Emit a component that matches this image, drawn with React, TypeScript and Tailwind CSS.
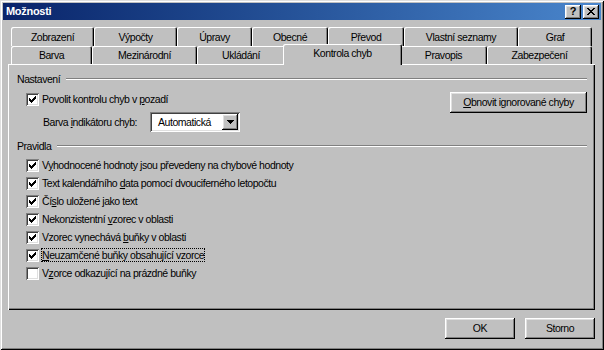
import React from "react";

const raised =
  "bg-[#c0c0c0] shadow-[inset_-1px_-1px_#000,inset_1px_1px_#fff,inset_-2px_-2px_#808080,inset_2px_2px_#dfdfdf]";
const sunken =
  "bg-white shadow-[inset_1px_1px_#808080,inset_-1px_-1px_#fff,inset_2px_2px_#404040,inset_-2px_-2px_#dfdfdf]";

const row1 = [
  { label: "Zobrazení", w: "w-[83px]" },
  { label: "Výpočty", w: "w-[83px]" },
  { label: "Úpravy", w: "w-[75px]" },
  { label: "Obecné", w: "w-[76px]" },
  { label: "Převod", w: "w-[76px]" },
  { label: "Vlastní seznamy", w: "w-[114px]" },
  { label: "Graf", w: "w-[74px]" },
];

const row2 = [
  { label: "Barva", w: "w-[81px]" },
  { label: "Mezinárodní", w: "w-[105px]" },
  { label: "Ukládání", w: "w-[88px]" },
  { label: "Kontrola chyb", w: "w-[119px]", active: true },
  { label: "Pravopis", w: "w-[87px]" },
  { label: "Zabezpečení", w: "w-[105px]" },
];

function Check({ checked }: { checked: boolean }) {
  return (
    <span className={`w-[13px] h-[13px] shrink-0 ${sunken}`}>
      {checked && (
        <svg width="13" height="13" viewBox="0 0 13 13" shapeRendering="crispEdges">
          <path
            d="M3 5h1v3h-1zM4 6h1v3h-1zM5 7h1v3h-1zM6 6h1v3h-1zM7 5h1v3h-1zM8 4h1v3h-1zM9 3h1v3h-1z"
            fill="#000"
          />
        </svg>
      )}
    </span>
  );
}

function GroupHeader({ title }: { title: string }) {
  return (
    <div className="flex items-center h-[14px] pr-[8px]">
      <span className="pr-[6px]">{title}</span>
      <div className="flex-1 h-[2px] border-t border-[#808080] border-b border-b-white" />
    </div>
  );
}

function Tab({ label, w, active }: { label: string; w: string; active?: boolean }) {
  if (active) {
    return (
      <div
        className={`relative z-10 -mx-[2px] -mb-[1px] h-[21px] ${w} flex items-center justify-center pb-[2px] bg-[#c0c0c0] rounded-t-[2px] shadow-[inset_1px_1px_#fff,inset_-1px_0_#000,inset_-2px_0_#808080]`}
      >
        {label}
      </div>
    );
  }
  return (
    <div
      className={`h-full ${w} flex items-center justify-center pt-[1px] bg-[#c0c0c0] rounded-t-[2px] shadow-[inset_1px_1px_#fff,inset_-1px_0_#000,inset_-2px_0_#808080]`}
    >
      {label}
    </div>
  );
}

const rules: { node: React.ReactNode; checked: boolean; focus?: boolean }[] = [
  { node: <>V<u>y</u>hodnocené hodnoty jsou převedeny na chybové hodnoty</>, checked: true },
  { node: <>Text kalendářního <u>d</u>ata pomocí dvouciferného letopočtu</>, checked: true },
  { node: <>Čí<u>s</u>lo uložené jako text</>, checked: true },
  { node: <>Nekonzistentní <u>v</u>zorec v oblasti</>, checked: true },
  { node: <>Vzorec vynechává <u>b</u>uňky v oblasti</>, checked: true },
  { node: <><u>N</u>euzamčené buňky obsahující vzorce</>, checked: true, focus: true },
  { node: <>V<u>z</u>orce odkazující na prázdné buňky</>, checked: false },
];

export default function App() {
  return (
    <div className="w-[604px] h-[350px] p-[3px] flex flex-col bg-[#c0c0c0] text-black text-[10.5px] tracking-[-0.45px] leading-none font-['Liberation_Sans',Arial,sans-serif] shadow-[inset_1px_1px_#dfdfdf,inset_-1px_-1px_#000,inset_2px_2px_#fff,inset_-2px_-2px_#808080] overflow-hidden">
      {/* Title bar */}
      <div className="h-[17px] flex items-center pl-[3px] pr-[2px] bg-linear-to-r from-[#0a246a] to-[#4a86cc]">
        <span className="font-bold text-white text-[11px] tracking-[-0.3px]">Možnosti</span>
        <div className="ml-auto flex gap-[2px]">
          <div className={`w-[16px] h-[14px] flex items-center justify-center font-bold text-[11px] tracking-normal ${raised}`}>?</div>
          <div className={`w-[16px] h-[14px] flex items-center justify-center ${raised}`}>
            <svg width="8" height="7" viewBox="0 0 8 7" shapeRendering="crispEdges">
              <path d="M0 0h2v1h-2zM6 0h2v1h-2zM1 1h2v1h-2zM5 1h2v1h-2zM2 2h4v1h-4zM3 3h2v1h-2zM2 4h4v1h-4zM1 5h2v1h-2zM5 5h2v1h-2zM0 6h2v1h-2zM6 6h2v1h-2z" fill="#000" />
            </svg>
          </div>
        </div>
      </div>

      <div className="pl-[5px] pr-[6px] pt-[7px] flex flex-col">
        {/* Tabs */}
        <div className="ml-[3px] flex flex-col">
          <div className="flex h-[19px]">
            {row1.map((t) => (
              <Tab key={t.label} label={t.label} w={t.w} />
            ))}
          </div>
          <div className="flex items-end h-[18px]">
            {row2.map((t) => (
              <Tab key={t.label} label={t.label} w={t.w} active={t.active} />
            ))}
          </div>
        </div>

        {/* Tab page */}
        <div className="h-[246px] pt-[8px] pl-[9px] flex flex-col bg-[#c0c0c0] shadow-[inset_1px_1px_#fff,inset_-1px_-1px_#000,inset_-2px_-2px_#808080]">
          <GroupHeader title="Nastavení" />
          <div className="mt-[4px] flex">
            <div className="flex flex-col">
              <div className="h-[18px] pl-[9px] flex items-center gap-[3px]">
                <Check checked />
                <span>Povolit kontrolu chyb v <u>p</u>ozadí</span>
              </div>
              <div className="mt-[4px] h-[20px] pl-[26px] flex items-center">
                <span className="w-[107px] whitespace-nowrap">Barva <u>i</u>ndikátoru chyb:</span>
                <div className={`w-[90px] h-[20px] p-[2px] flex items-center ${sunken}`}>
                  <span className="flex-1 pl-[6px]">Automatická</span>
                  <div className={`w-[16px] h-[16px] flex items-center justify-center ${raised}`}>
                    <svg width="7" height="4" viewBox="0 0 7 4" shapeRendering="crispEdges">
                      <path d="M0 0h7v1h-7zM1 1h5v1h-5zM2 2h3v1h-3zM3 3h1v1h-1z" fill="#000" />
                    </svg>
                  </div>
                </div>
              </div>
            </div>
            <div className={`ml-auto mr-[8px] mt-[2px] w-[137px] h-[21px] flex items-center justify-center ${raised}`}>
              <span><u>O</u>bnovit ignorované chyby</span>
            </div>
          </div>

          <div className="mt-[7px]">
            <GroupHeader title="Pravidla" />
          </div>
          <div className="mt-[3px] flex flex-col">
            {rules.map((r, i) => (
              <div key={i} className="h-[18px] pl-[9px] flex items-center gap-[2px]">
                <Check checked={r.checked} />
                <span
                  className={
                    r.focus
                      ? "px-[1px] py-[2px] outline-1 outline-dotted outline-black -outline-offset-1"
                      : "px-[1px]"
                  }
                >
                  {r.node}
                </span>
              </div>
            ))}
          </div>
        </div>

        {/* Bottom buttons */}
        <div className="mt-[8px] flex justify-end gap-[10px]">
          <div className={`w-[70px] h-[21px] flex items-center justify-center ${raised}`}>OK</div>
          <div className={`w-[70px] h-[21px] flex items-center justify-center ${raised}`}>Storno</div>
        </div>
      </div>
    </div>
  );
}
